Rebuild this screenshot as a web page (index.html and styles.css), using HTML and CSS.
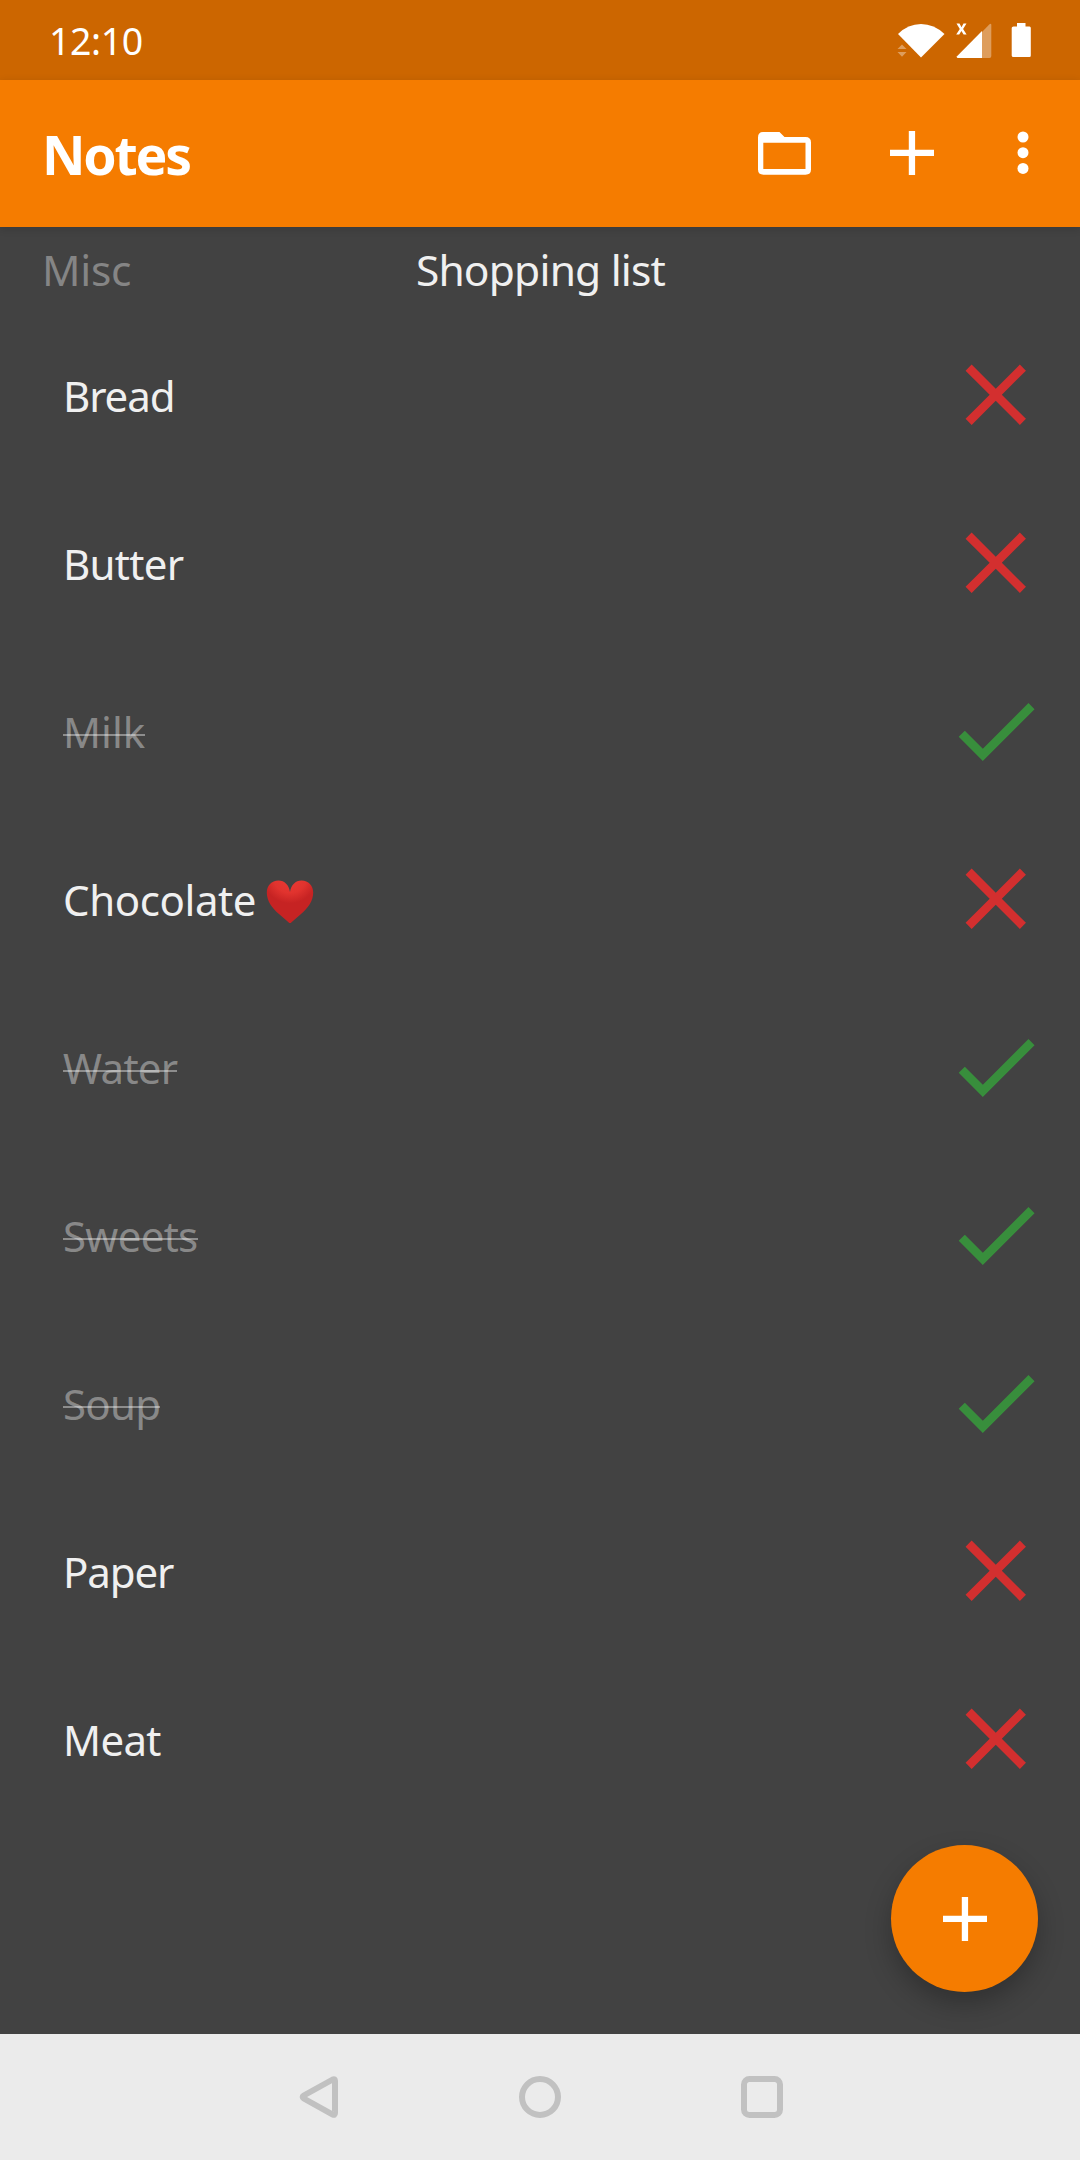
FILE: index.html
```html
<!DOCTYPE html>
<html lang="en">
<head>
<meta charset="utf-8">
<title>Notes</title>
<link rel="stylesheet" href="styles.css">
</head>
<body>
<svg class="defs" width="0" height="0" aria-hidden="true">
  <symbol id="close" viewBox="0 0 24 24"><path d="M19 6.41L17.59 5 12 10.59 6.41 5 5 6.41 10.59 12 5 17.59 6.41 19 12 13.41 17.59 19 19 17.59 13.41 12z"/></symbol>
  <symbol id="check" viewBox="0 0 24 24"><path d="M9 16.17L4.83 12l-1.42 1.41L9 19 21 7l-1.41-1.41z"/></symbol>
  <radialGradient id="heart-fill" cx="24" cy="-4" r="34" gradientUnits="userSpaceOnUse">
    <stop offset="0" stop-color="#ea3b35"/><stop offset=".5" stop-color="#e1332e"/><stop offset=".8" stop-color="#c62323"/><stop offset="1" stop-color="#c62323"/>
  </radialGradient>
</svg>
<div class="screen">
  <div class="status">
    <span class="clock">12:10</span>
    <svg class="status-icons" width="136" height="40" viewBox="0 0 136 40">
      <path fill="#fff" d="M1 14Q11 4 24 4T47.500 14L24 37.500z"/>
      <path fill="#fff" fill-opacity=".36" d="M.5 29L5 24.500 9.500 29zM.5 32h9L5 36.700z"/>
      <path fill="#fff" fill-opacity=".36" d="M85 12L92.500 4.300Q94.300 3 94.300 5V36Q94.300 38 92.500 38H85z"/>
      <path fill="#fff" d="M85 11V38H60.500Q59.200 37.500 60 36.300z"/>
      <path fill="#fff" d="M59.500 3.500h3l2 3.800 2-3.800h3l-3.400 5.600 3.500 5.400h-3l-2.200-3.600-2.200 3.600h-3l3.600-5.400z"/>
      <path fill="#fff" d="M120 3h8.500v3.500h4Q133.800 6.500 133.800 8V35.500Q133.800 37 132.500 37h-16Q114.700 37 114.700 35.500V8Q114.700 6.500 116.500 6.500h3.500z"/>
    </svg>
  </div>
  <header class="appbar">
    <h1>Notes</h1>
    <svg class="folder" width="53" height="43" viewBox="0 0 53 43"><path fill="#fff" fill-rule="evenodd" d="M5 0H21.500L26.500 5H47.500Q53 5 53 10.500V37.500Q53 42.700 47.500 42.700H5.500Q0 42.700 0 37.500V5.500Q0 0 5 0zM5.300 10.800V37H47.500V10.800z"/></svg>
    <svg class="plus" width="44" height="44" viewBox="0 0 44 44"><path fill="#fff" d="M18.800 0h6.300v18.700H44V25H25.100V44h-6.300V25H0V18.700h18.800z"/></svg>
    <svg class="more" width="12" height="44" viewBox="0 0 12 44" fill="#fff"><circle cx="6" cy="6" r="5.500"/><circle cx="6" cy="21.700" r="5.500"/><circle cx="6" cy="37.400" r="5.500"/></svg>
  </header>
  <main>
    <nav class="tabs"><span class="prev">Misc</span><span class="current">Shopping list</span><span></span></nav>
    <ul class="list">
      <li><span class="name tight">Bread</span><svg class="no"><use href="#close"/></svg></li>
      <li><span class="name">Butter</span><svg class="no"><use href="#close"/></svg></li>
      <li><span class="name done wide">Milk</span><svg class="yes"><use href="#check"/></svg></li>
      <li><span class="name loose">Chocolate</span><svg class="heart" width="48" height="44" viewBox="0 0 48 44"><path fill="url(#heart-fill)" d="M24 12C23 5 18.500.500 12.500.500C5.500.500.800 5.500.800 12.500C.800 21 6 28 13 34L22.500 42.200Q24 44 25.500 42.200L35 34C42 28 47.200 21 47.200 12.500C47.200 5.500 42.500.500 35.500.500C29.500.500 25 5 24 12z"/></svg><svg class="no"><use href="#close"/></svg></li>
      <li><span class="name done">Water</span><svg class="yes"><use href="#check"/></svg></li>
      <li><span class="name done">Sweets</span><svg class="yes"><use href="#check"/></svg></li>
      <li><span class="name done">Soup</span><svg class="yes"><use href="#check"/></svg></li>
      <li><span class="name tight">Paper</span><svg class="no"><use href="#close"/></svg></li>
      <li><span class="name">Meat</span><svg class="no"><use href="#close"/></svg></li>
    </ul>
    <button class="fab" aria-label="Add"><svg width="44" height="44" viewBox="0 0 44 44"><path fill="#fff" d="M18.800 0h6.300v18.700H44V25H25.100V44h-6.300V25H0V18.700h18.800z"/></svg></button>
  </main>
  <footer class="navbar">
    <svg width="42" height="44" viewBox="0 0 42 44"><path d="M33.700 4.500L4.800 20.500Q2.500 22 4.800 23.500L33.700 39.500Q36 40.500 36 38V6Q36 3.500 33.700 4.500z"/></svg>
    <svg width="42" height="42" viewBox="0 0 42 42"><circle cx="21" cy="21" r="18"/></svg>
    <svg width="42" height="42" viewBox="0 0 42 42"><rect x="3" y="3" width="36" height="36" rx="5.500"/></svg>
  </footer>
</div>
</body>
</html>
```
FILE: styles.css
```css
* { box-sizing: border-box; }
body {
  margin: 0;
  background: #424242;
  font-family: "Noto Sans", "Open Sans", sans-serif;
  color: #f0f0f0;
}
svg { display: block; flex: none; }
.defs { position: absolute; }
.screen {
  width: 1080px;
  height: 2160px;
  display: flex;
  flex-direction: column;
  overflow: hidden;
}
.status {
  height: 80px;
  flex: none;
  background: #cc6600;
  color: #fff;
  display: flex;
  justify-content: space-between;
  align-items: center;
  padding: 0 47px 0 49px;
}
.clock { font-size: 37.500px; line-height: 54px; padding-top: 1px; letter-spacing: -.4px; }
.appbar {
  height: 147px;
  flex: none;
  background: #f57c00;
  color: #fff;
  display: flex;
  align-items: center;
  padding: 0 51px 1px 42px;
  z-index: 1;
  box-shadow: 0 2px 8px rgba(0, 0, 0, .14);
}
h1 {
  margin: 3px auto 0 0;
  font-size: 53.500px;
  line-height: 74px;
  letter-spacing: -2.200px;
}
.plus { margin-left: 79px; }
.more { margin-left: 83px; }
main { flex: 1; position: relative; }
.tabs {
  height: 84px;
  display: grid;
  grid-template-columns: 1fr auto 1fr;
  font-size: 42.500px;
  line-height: 85px;
  padding: 0 41px;
}
.prev { color: #858585; padding-left: 1px; letter-spacing: -.3px; }
.current { letter-spacing: -.8px; padding-left: 1px; }
.list { margin: 0; padding: 0; list-style: none; }
.list li {
  height: 168px;
  display: flex;
  align-items: center;
  padding: 0 33px 0 63px;
}
.name { font-size: 42px; line-height: 58px; letter-spacing: -.7px; padding-top: 2px; position: relative; }
.tight { letter-spacing: -1.100px; }
.loose { letter-spacing: -.4px; }
.wide { letter-spacing: 0; }
.done { color: rgba(255, 255, 255, .38); }
.done::after {
  content: "";
  position: absolute;
  left: 0;
  right: 0;
  top: 33px;
  height: 2px;
  background: rgba(255, 255, 255, .4);
}
.heart { margin: 5px 0 0 10px; }
.no, .yes { width: 103.500px; height: 103.500px; margin-left: auto; }
.no { fill: #d32f2f; }
.yes { fill: #388e3c; }
.fab {
  position: absolute;
  right: 42px;
  bottom: 42px;
  width: 147px;
  height: 147px;
  padding: 0;
  border: 0;
  border-radius: 50%;
  background: #f57c00;
  display: grid;
  place-items: center;
  box-shadow: 0 12px 26px rgba(0, 0, 0, .26);
}
.navbar {
  height: 126px;
  flex: none;
  background: #ebebeb;
  display: flex;
  align-items: center;
  justify-content: center;
  gap: 179px;
  padding-left: 1px;
  fill: none;
  stroke: #c1c1c1;
  stroke-width: 6px;
  z-index: 1;
}
.navbar svg:last-child { margin-left: 1px; }
.navbar svg:first-child { margin-right: -1px; }
```
